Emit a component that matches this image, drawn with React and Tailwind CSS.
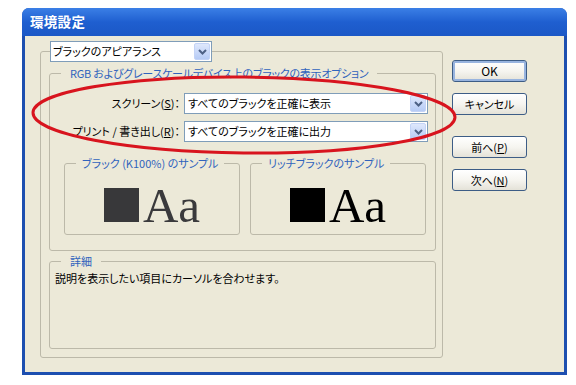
import React from "react";

function Chevron() {
  return (
    <svg width="9" height="6" viewBox="0 0 9 6">
      <path d="M1 1 L4.5 4.5 L8 1" fill="none" stroke="#4d6185" strokeWidth="2" />
    </svg>
  );
}

function Combo({ text, className = "", pad = "pl-[2px]" }) {
  return (
    <div className={`flex h-[21px] bg-white border border-[#7f9db9] ${className}`}>
      <div className={`flex-1 flex items-center ${pad} text-[11px] leading-none text-black whitespace-nowrap overflow-hidden`}>
        {text}
      </div>
      <div className="w-[16px] my-[1px] mr-[1px] flex items-center justify-center rounded-[2px] border border-[#c3d3f6] bg-linear-to-b from-[#dfe8fc] to-[#b6cbf5]">
        <Chevron />
      </div>
    </div>
  );
}

function Btn({ children, def = false, className = "" }) {
  return (
    <button
      className={`w-[75px] h-[22px] rounded-[3px] border border-[#3d5d86] bg-linear-to-b from-[#ffffff] via-[#f6f5f0] to-[#e4e2d8] text-[11px] leading-none text-black flex items-center justify-center ${
        def ? "shadow-[inset_0_0_0_2px_#98b4df]" : ""
      } ${className}`}
    >
      {children}
    </button>
  );
}

function Sample({ title, dark }) {
  const color = dark ? "text-[#3a3a3c]" : "text-black";
  const sq = dark ? "bg-[#38383a]" : "bg-black";
  return (
    <fieldset className="border border-[#bcb9a9] rounded-[3px] min-w-0">
      <legend className="ml-[11px] px-[6px] text-[11px] leading-[13px] text-[#3063bd] whitespace-nowrap">
        {title}
      </legend>
      <div className="pt-[11px] pb-[4px] flex items-baseline justify-center gap-[4px]">
        <div className={`w-[35px] h-[34px] ${sq}`} />
        <span className={`font-['Liberation_Serif',serif] text-[49px] leading-[49px] ${color} [font-feature-settings:normal]`}>
          Aa
        </span>
      </div>
    </fieldset>
  );
}

export default function App() {
  return (
    <div className="relative w-[576px] h-[385px] bg-white pl-[22px] pt-[8px] overflow-hidden font-['Noto_Sans_CJK_JP',sans-serif] [font-feature-settings:'palt']">
      <div className="w-[545px] h-[367px] flex flex-col rounded-t-[7px] bg-[#1d4fb0]">
        {/* title bar */}
        <div className="h-[28px] flex items-center pl-[8px] rounded-t-[7px] bg-linear-to-b from-[#3b7fe6] via-[#1f5fd0] to-[#1b58c6]">
          <span className="text-white font-bold text-[13.5px] leading-none tracking-[0.3px]">環境設定</span>
        </div>
        {/* body */}
        <div className="flex-1 mx-[3px] mb-[3px] bg-[#ece9d8] flex pl-[15px] pt-[5px]">
          <fieldset className="w-[403px] self-start border border-[#bcb9a9] rounded-[3px]">
            <legend className="ml-[9px]">
              <Combo text="ブラックのアピアランス" className="w-[162px]" />
            </legend>
            <div className="pt-[5px] pl-[8px] pr-[6px] pb-[8px]">
              {/* RGB group */}
              <fieldset className="border border-[#bcb9a9] rounded-[3px]">
                <legend className="ml-[11px] px-[9px] text-[11px] leading-[13px] tracking-[-0.25px] text-[#3063bd] whitespace-nowrap">
                  RGB およびグレースケールデバイス上のブラックの表示オプション
                </legend>
                <div className="pt-[13px] pb-[15px]">
                  <div className="flex flex-col gap-[7px] pl-[7px] pr-[7px]">
                    <div className="flex items-center">
                      <div className="w-[123px] text-right text-[11px] leading-none text-black whitespace-nowrap">
                        スクリーン(<span className="underline">S</span>)：
                      </div>
                      <Combo text="すべてのブラックを正確に表示" className="flex-1 ml-[4px]" pad="pl-[3px]" />
                    </div>
                    <div className="flex items-center">
                      <div className="w-[123px] text-right text-[11px] leading-none text-black whitespace-nowrap">
                        プリント / 書き出し(<span className="underline">R</span>)：
                      </div>
                      <Combo text="すべてのブラックを正確に出力" className="flex-1 ml-[4px]" pad="pl-[3px]" />
                    </div>
                  </div>
                  <div className="mt-[15px] pl-[14px] pr-[9px] grid grid-cols-[176px_176px] gap-[10px]">
                    <Sample title="ブラック (K100%) のサンプル" dark />
                    <Sample title="リッチブラックのサンプル" />
                  </div>
                </div>
              </fieldset>
              {/* detail group */}
              <fieldset className="mt-[4px] border border-[#bcb9a9] rounded-[3px]">
                <legend className="ml-[11px] px-[9px] text-[11px] leading-[13px] text-[#3063bd]">詳細</legend>
                <div className="h-[80px] pt-[3px] pl-[5px] text-[11px] leading-[14px] text-black">
                  説明を表示したい項目にカーソルを合わせます。
                </div>
              </fieldset>
            </div>
          </fieldset>
          {/* buttons */}
          <div className="ml-[9px] mt-[19px] flex flex-col">
            <Btn def className="text-[12px]">OK</Btn>
            <Btn className="mt-[11px]">キャンセル</Btn>
            <Btn className="mt-[21px]">
              前へ(<span className="underline">P</span>)
            </Btn>
            <Btn className="mt-[11px]">
              次へ(<span className="underline">N</span>)
            </Btn>
          </div>
        </div>
      </div>
      {/* red annotation ellipse */}
      <svg
        className="absolute left-0 top-0 pointer-events-none"
        width="576"
        height="385"
        viewBox="0 0 576 385"
      >
        <ellipse
          cx="244"
          cy="115"
          rx="211"
          ry="38"
          transform="rotate(0.6 244 115)"
          fill="none"
          stroke="#d8141e"
          strokeWidth="3"
        />
      </svg>
    </div>
  );
}
